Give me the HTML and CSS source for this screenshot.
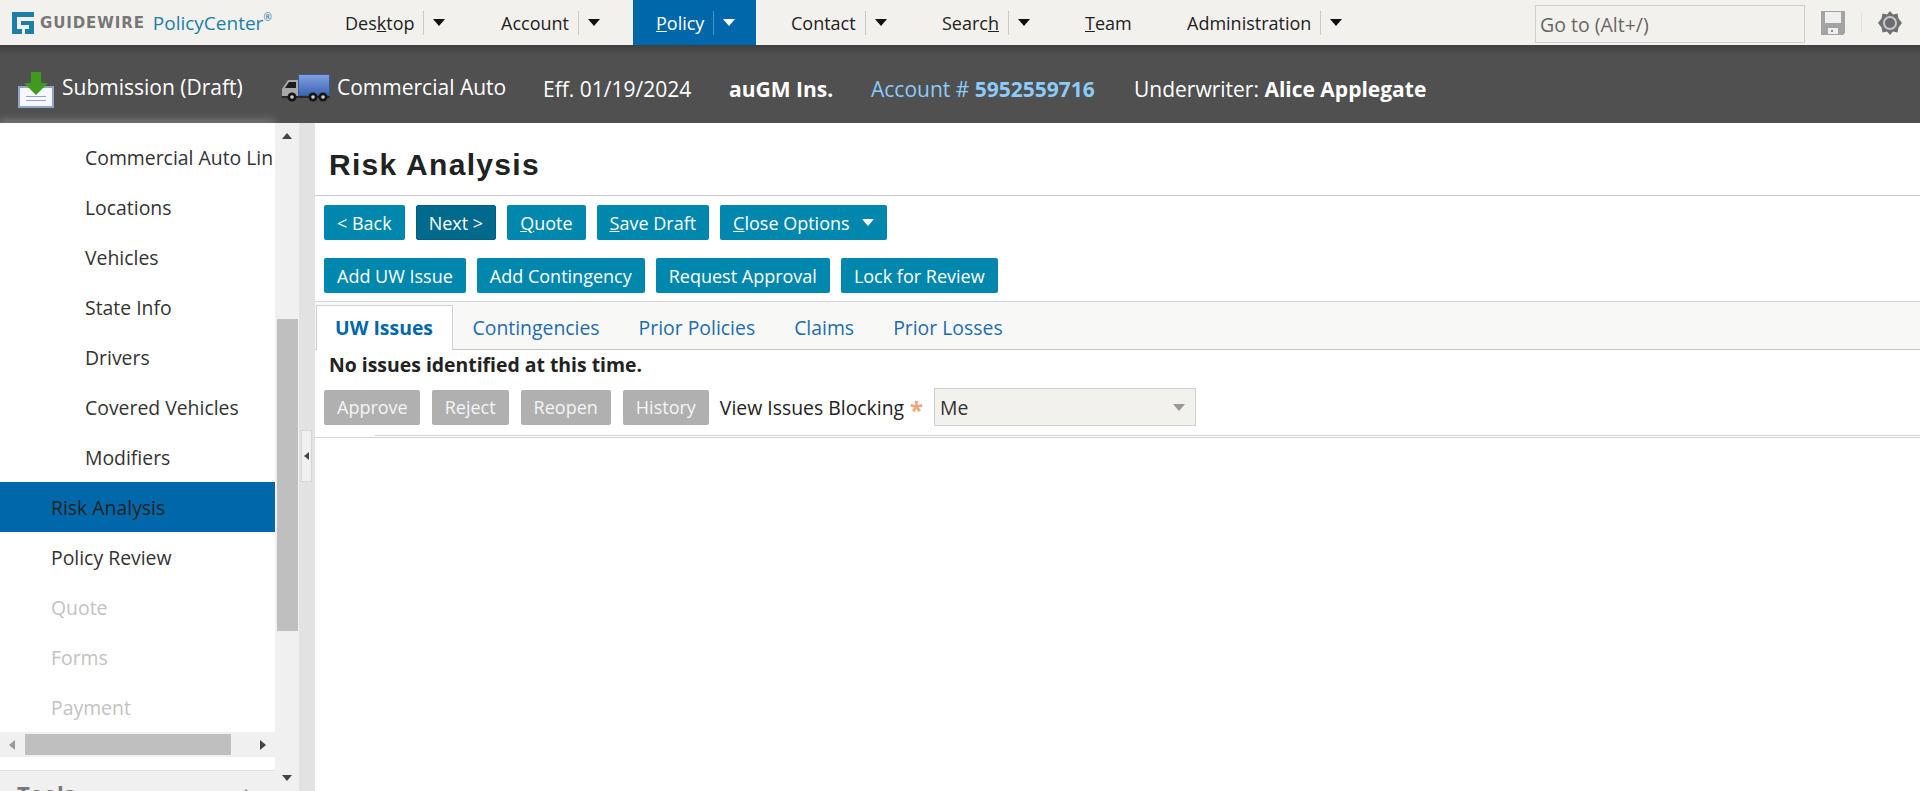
FILE: index.html
```html
<!DOCTYPE html>
<html>
<head>
  <title>Risk Analysis</title>
  <link rel="stylesheet" href="styles.css">
</head>
<body>
  <header class="topbar">
    <div class="logo">
      <svg class="logo-mark" viewBox="0 0 22 22" width="22" height="22">
        <path d="M0 0H22V5H5V17H10V22H0Z" fill="#1c7fa6"/>
        <path d="M9 9H22V22H13V17H17V13H9Z" fill="#1c7fa6"/>
      </svg>
      <span class="logo-gw">GUIDEWIRE</span>
      <span class="logo-pc">PolicyCenter</span><span class="logo-reg">®</span>
    </div>
    <nav class="menu">
      <div class="menu-item desktop"><span>Des<u>k</u>top</span><i class="sep"></i><i class="caret"></i></div>
      <div class="menu-item account"><span>Account</span><i class="sep"></i><i class="caret"></i></div>
      <div class="menu-item policy"><span><u>P</u>olicy</span><i class="sep"></i><i class="caret"></i></div>
      <div class="menu-item contact"><span>Contact</span><i class="sep"></i><i class="caret"></i></div>
      <div class="menu-item search"><span>Searc<u>h</u></span><i class="sep"></i><i class="caret"></i></div>
      <div class="menu-item team"><span><u>T</u>eam</span></div>
      <div class="menu-item admin"><span>Administration</span><i class="sep"></i><i class="caret"></i></div>
    </nav>
    <input class="goto" type="text" placeholder="Go to (Alt+/)">
    <svg class="save-icon" viewBox="0 0 24 24" width="24" height="24">
      <path d="M0 0H24V22L22 24H0Z" fill="#a3a3a3"/>
      <path d="M4 1H20V12H4Z" fill="#efefef"/>
      <path d="M7 17H17V23H7Z" fill="#efefef"/>
      <path d="M10 19H12V21H10Z" fill="#888"/>
    </svg>
    <i class="tool-sep"></i>
    <svg class="gear-icon" viewBox="0 0 24 24" width="24" height="24">
      <path d="M12 0L15 3.500L19.500 2.500L20.500 7.500L24 12L20.500 16.500L19.500 21.500L15 20.500L12 24L9 20.500L4.500 21.500L3.500 16.500L0 12L3.500 7.500L4.500 2.500L9 3.500Z" fill="#707070"/>
      <circle cx="12" cy="12" r="7" fill="#c9c9c9"/>
      <circle cx="12" cy="12" r="5" fill="#6c6c6c"/>
    </svg>
  </header>

  <div class="infobar">
    <svg class="sub-icon" viewBox="0 0 36 36" width="36" height="36">
      <path d="M0 14H36V36H0Z" fill="#8ea4cc"/>
      <path d="M2 16H34V34H2Z" fill="#f6f7fb"/>
      <path d="M8 24H28V25H8ZM8 28H28V29H8Z" fill="#8ea4cc"/>
      <path d="M13 0H23V11H30L18 23L6 11H13Z" fill="#3f9a1e"/>
    </svg>
    <span class="sub-label">Submission (Draft)</span>
    <svg class="truck-icon" viewBox="0 0 50 28" width="50" height="28">
      <defs>
        <linearGradient id="truck-body" x1="0" y1="0" x2="0" y2="1">
          <stop offset="0" stop-color="#7f9fe0"/>
          <stop offset="1" stop-color="#3f66b4"/>
        </linearGradient>
      </defs>
      <path d="M17 0H49V22H17Z" fill="#3a5a9c"/>
      <path d="M18 1H48V21H18Z" fill="url(#truck-body)"/>
      <path d="M1 15L7 6H17V24H1Z" fill="#a8a8a8"/>
      <path d="M8 8H15V14H4Z" fill="#1c1c1c"/>
      <path d="M1 22H49V24H1Z" fill="#2a2a2a"/>
      <circle cx="11" cy="23" r="4.500" fill="#161616"/><circle cx="11" cy="23" r="1.800" fill="#d0d0d0"/>
      <circle cx="32" cy="23" r="4.500" fill="#161616"/><circle cx="32" cy="23" r="1.800" fill="#d0d0d0"/>
      <circle cx="42" cy="23" r="4.500" fill="#161616"/><circle cx="42" cy="23" r="1.800" fill="#d0d0d0"/>
    </svg>
    <span class="lob-label">Commercial Auto</span>
    <span class="eff">Eff. 01/19/2024</span>
    <strong class="insurer">auGM Ins.</strong>
    <span class="acct">Account # <strong>5952559716</strong></span>
    <span class="uw">Underwriter: <strong>Alice Applegate</strong></span>
  </div>

  <div class="workspace">
    <aside class="sidebar">
      <ul class="steps">
        <li class="sub">Commercial Auto Lin</li>
        <li class="sub">Locations</li>
        <li class="sub">Vehicles</li>
        <li class="sub">State Info</li>
        <li class="sub">Drivers</li>
        <li class="sub">Covered Vehicles</li>
        <li class="sub">Modifiers</li>
        <li class="current">Risk Analysis</li>
        <li>Policy Review</li>
        <li class="off">Quote</li>
        <li class="off">Forms</li>
        <li class="off">Payment</li>
      </ul>
      <div class="hscroll">
        <i class="arrow-left"></i>
        <div class="hthumb"></div>
        <i class="arrow-right"></i>
      </div>
      <div class="tools"><span>Tools</span><i class="tools-caret"></i></div>
    </aside>
    <div class="vscroll">
      <i class="arrow-up"></i>
      <div class="vthumb"></div>
      <i class="arrow-down"></i>
    </div>
    <div class="splitter">
      <div class="split-handle"><i class="arrow-handle"></i></div>
    </div>

    <main class="content">
      <h1 class="page-title">Risk Analysis</h1>
      <div class="btn-row first">
        <button class="btn">&lt; Back</button>
        <button class="btn next">Next &gt;</button>
        <button class="btn"><u>Q</u>uote</button>
        <button class="btn"><u>S</u>ave Draft</button>
        <button class="btn"><u>C</u>lose Options<i class="btn-caret"></i></button>
      </div>
      <div class="btn-row second">
        <button class="btn">Add UW Issue</button>
        <button class="btn">Add Contingency</button>
        <button class="btn">Request Approval</button>
        <button class="btn">Lock for Review</button>
      </div>
      <div class="tabs">
        <div class="tab active">UW Issues</div>
        <div class="tab">Contingencies</div>
        <div class="tab">Prior Policies</div>
        <div class="tab">Claims</div>
        <div class="tab">Prior Losses</div>
      </div>
      <p class="notice">No issues identified at this time.</p>
      <div class="issue-row">
        <button class="btn disabled">Approve</button>
        <button class="btn disabled">Reject</button>
        <button class="btn disabled">Reopen</button>
        <button class="btn disabled">History</button>
        <span class="field-label">View Issues Blocking</span>
        <span class="required">*</span>
        <div class="select">Me<i class="select-caret"></i></div>
      </div>
      <div class="rule"></div>
    </main>
  </div>
</body>
</html>
```

FILE: styles.css
```css
* {
  box-sizing: border-box;
}
html, body {
  margin: 0;
  height: 791px;
  overflow: hidden;
}
body {
  font-family: "Open Sans", sans-serif;
  font-size: 19.400px;
  color: #333;
  background: #fff;
}
i {
  display: block;
  font-style: normal;
}

/* top menu */
.topbar {
  height: 45px;
  background: #f3f1ee;
  display: flex;
  align-items: center;
}
.logo {
  width: 345px;
  padding-left: 12px;
  display: flex;
  align-items: center;
  flex: none;
}
.logo-mark {
  flex: none;
}
.logo-gw {
  font-family: "DejaVu Sans", sans-serif;
  font-weight: bold;
  font-size: 15px;
  letter-spacing: 0.9px;
  color: #777;
  margin-left: 6px;
}
.logo-pc {
  font-size: 19px;
  color: #1c7fa6;
  margin-left: 8px;
}
.logo-reg {
  font-size: 10px;
  color: #1c6f96;
  margin-bottom: 12px;
}
.menu {
  display: flex;
  height: 45px;
  flex: none;
  width: 1190px;
  font-size: 18px;
}
.menu-item {
  display: flex;
  align-items: center;
  height: 45px;
  color: #222;
  flex: none;
}
.sep {
  width: 1px;
  height: 24px;
  background: #c8c8c8;
  margin: 0 9px 0 9px;
}
.caret {
  width: 0;
  height: 0;
  border-left: 6px solid transparent;
  border-right: 6px solid transparent;
  border-top: 7px solid #111;
}
.desktop { width: 156px; }
.account { width: 132px; }
.policy {
  width: 123px;
  padding-left: 23px;
  background: #0067ab;
  color: #fff;
}
.policy .sep {
  background: #4d92c2;
}
.policy .caret {
  border-top-color: #fff;
}
.contact { width: 186px; padding-left: 35px; }
.search { width: 143px; }
.team { width: 102px; }
.admin { width: 348px; }
.goto {
  width: 270px;
  height: 38px;
  margin-top: 3px;
  flex: none;
  border: 1px solid #cfcdc8;
  background: #f3f1ee;
  font: 19.500px "Open Sans", sans-serif;
  padding: 0 4px;
  color: #666;
}
.goto::placeholder {
  color: #666;
  opacity: 1;
}
.save-icon {
  margin-left: 16px;
  flex: none;
}
.tool-sep {
  width: 1px;
  height: 20px;
  background: #e4e2de;
  margin: 0 16px;
  flex: none;
}
.gear-icon {
  flex: none;
}

/* info bar */
.infobar {
  height: 78px;
  background: linear-gradient(#3f3f3f, #505050 10px);
  color: #fff;
  display: flex;
  align-items: flex-start;
  padding-left: 18px;
  font-size: 21px;
}
.sub-icon {
  margin-top: 27px;
  flex: none;
}
.sub-label {
  margin: 28px 0 0 8px;
  width: 219px;
}
.truck-icon {
  margin-top: 29px;
  flex: none;
}
.lob-label {
  margin: 28px 0 0 6px;
  width: 206px;
}
.eff {
  margin-top: 30px;
  width: 186px;
}
.insurer {
  margin-top: 30px;
  width: 142px;
}
.acct {
  margin-top: 30px;
  width: 263px;
  color: #8ccbfb;
}
.uw {
  margin-top: 30px;
}

/* left column */
.workspace {
  display: flex;
  height: 668px;
}
.sidebar {
  width: 275px;
  flex: none;
  display: flex;
  flex-direction: column;
  background: #fff;
  box-shadow: 0 -3px 8px rgba(255,255,255,0.25);
  overflow: hidden;
}
.steps {
  list-style: none;
  margin: 0;
  padding: 9px 0 0;
  flex: none;
  height: 609px;
  overflow: hidden;
}
.steps li {
  height: 50px;
  line-height: 52px;
  padding-left: 51px;
  white-space: nowrap;
  overflow: hidden;
}
.steps .sub {
  padding-left: 85px;
}
.steps .current {
  background: #0067ab;
  color: #222;
}
.steps .off {
  color: #c2c2c2;
}
.hscroll {
  flex: none;
  height: 25px;
  background: #f0f0f0;
  display: flex;
  align-items: center;
  padding-left: 9px;
}
.arrow-left {
  border-top: 5.500px solid transparent;
  border-bottom: 5.500px solid transparent;
  border-right: 6px solid #999;
}
.hthumb {
  width: 206px;
  height: 21px;
  background: #bfbfbf;
  margin: 0 29px 0 10px;
}
.arrow-right {
  border-top: 5.500px solid transparent;
  border-bottom: 5.500px solid transparent;
  border-left: 6px solid #444;
}
.tools {
  margin-top: 13px;
  border-top: 1px solid #e0e0d8;
  background: #f0f0f0;
  flex: none;
  height: 21px;
  padding: 7px 24px 0 17px;
  font-size: 22px;
  line-height: 30px;
  font-weight: bold;
  color: #777;
  display: flex;
  justify-content: space-between;
  align-items: flex-start;
}
.tools-caret {
  margin-top: 11px;
  border-left: 5px solid transparent;
  border-right: 5px solid transparent;
  border-bottom: 6px solid #888;
}
.vscroll {
  width: 24px;
  flex: none;
  background: #f0f0f0;
  display: flex;
  flex-direction: column;
  align-items: center;
  padding-top: 10px;
}
.arrow-up {
  border-left: 5.500px solid transparent;
  border-right: 5.500px solid transparent;
  border-bottom: 6px solid #444;
}
.vthumb {
  width: 21px;
  height: 312px;
  background: #bfbfbf;
  margin: 180px 0 144px;
}
.arrow-down {
  border-left: 5.500px solid transparent;
  border-right: 5.500px solid transparent;
  border-top: 6px solid #444;
}
.splitter {
  width: 16px;
  flex: none;
  background: #e2e2e2;
  position: relative;
}
.split-handle {
  position: absolute;
  left: 2px;
  top: 307px;
  width: 11px;
  height: 52px;
  background: #f0f0f0;
  border: 1px solid #d4d4d4;
  display: flex;
  align-items: center;
  justify-content: center;
}
.arrow-handle {
  border-top: 4px solid transparent;
  border-bottom: 4px solid transparent;
  border-right: 5px solid #444;
}

/* main area */
.content {
  flex: 1;
  min-width: 0;
}
.page-title {
  margin: 0;
  height: 73px;
  padding: 26px 0 0 14px;
  font-family: "Liberation Sans", sans-serif;
  font-size: 30px;
  line-height: 32px;
  letter-spacing: 1.300px;
  color: #222;
  border-bottom: 1px solid #c8c8c8;
}
.btn-row {
  display: flex;
  padding-left: 9px;
  gap: 11px;
}
.btn-row.first {
  margin-top: 9px;
}
.btn-row.second {
  margin-top: 18px;
}
.btn {
  height: 35px;
  padding: 0 13px;
  border: none;
  border-radius: 2px;
  background: #0087ae;
  color: #fff;
  font: 18px "Open Sans", sans-serif;
  display: flex;
  align-items: center;
}
.next {
  padding: 0 12px;
  background: #006a8c;
  border: 1px solid #005f8a;
}
.btn-caret {
  margin-left: 12px;
  border-left: 6px solid transparent;
  border-right: 6px solid transparent;
  border-top: 7px solid #fff;
}
.btn.disabled {
  background: #b0b0b0;
  color: #f5f5f5;
}
.tabs {
  margin-top: 8px;
  height: 49px;
  background: #f8f8f6;
  border-top: 1px solid #d4d4d4;
  border-bottom: 1px solid #c4c4c4;
  display: flex;
  align-items: flex-end;
  padding-left: 1px;
}
.tab {
  height: 43px;
  line-height: 44px;
  padding: 0 19.500px;
  color: #1f6cad;
}
.tab.active {
  width: 137px;
  height: 45px;
  margin-bottom: -1px;
  background: #fff;
  border: 1px solid #d0d0d0;
  border-bottom: none;
  font-weight: bold;
  color: #0067ab;
  padding: 0 18px;
}
.notice {
  margin: 0;
  height: 38px;
  padding-left: 14px;
  line-height: 29px;
  font-weight: bold;
  color: #222;
}
.issue-row {
  display: flex;
  align-items: center;
  padding-left: 9px;
  gap: 12px;
  height: 38px;
}
.issue-row .btn:first-child {
  padding-right: 12px;
}
.field-label {
  color: #222;
  margin-left: -1px;
}
.required {
  color: #f5a27c;
  margin: 4px 0 0 -6px;
  font-size: 24px;
  font-weight: bold;
  width: 12px;
}
.select {
  width: 262px;
  height: 38px;
  padding-left: 5px;
  background: #f3f1ee;
  border: 1px solid #d0d0d0;
  display: flex;
  align-items: center;
  justify-content: space-between;
  color: #333;
}
.select-caret {
  margin-right: 10px;
  border-left: 6.500px solid transparent;
  border-right: 6.500px solid transparent;
  border-top: 7px solid #999;
}
.rule {
  margin-top: 9px;
  height: 3px;
  border-bottom: 1px solid #d4d4d4;
}
.rule::before {
  content: "";
  display: block;
  margin-left: 60px;
  border-top: 1px solid #d4d4d4;
}
```
